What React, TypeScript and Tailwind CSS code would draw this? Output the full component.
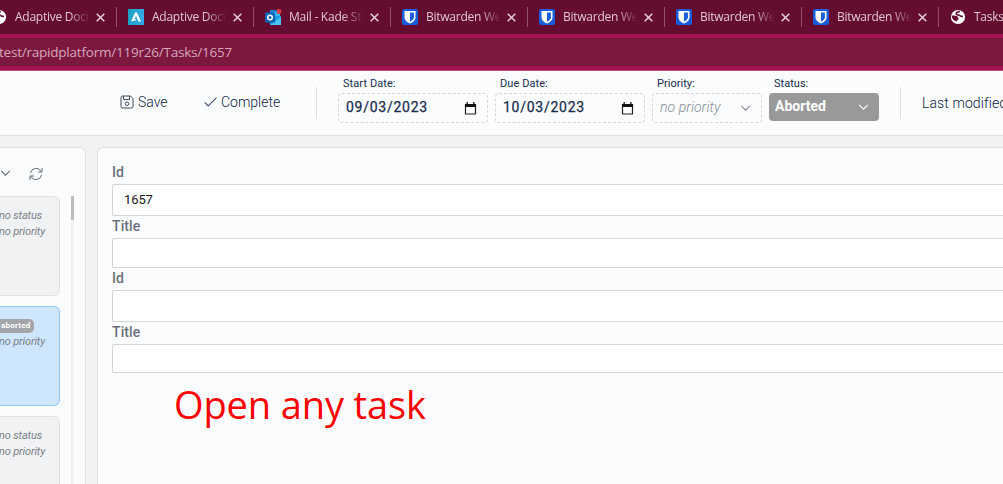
import type { ReactNode } from "react";

const Globe = () => (
  <svg className="size-4 shrink-0" viewBox="0 0 16 16">
    <circle cx="8" cy="8" r="7.1" fill="#fff" />
    <path d="M1.800 6.600c2.700.2 5 .1 6 1.300 1.200 1.300.9 2.300-.3 3.100l-.7 1.600C4.300 12.400 1.600 9.800 1.800 6.600z" fill="#640d31" />
    <path d="M9.800 2.600C7.400 2.500 5.900 3.700 6.300 5c.3 1.200 2.200.8 3.400 1.500 1 .6 1.200 1.200 3.200.7" fill="none" stroke="#640d31" strokeWidth="1.600" />
  </svg>
);

const Adaptive = () => (
  <svg className="size-4 shrink-0" viewBox="0 0 16 16">
    <defs>
      <linearGradient id="ad" x1="0" y1="0" x2="1" y2="0">
        <stop offset="0" stopColor="#18a3c0" />
        <stop offset="1" stopColor="#34a9e8" />
      </linearGradient>
    </defs>
    <rect width="16" height="16" fill="url(#ad)" />
    <path d="M3 12.500 7 3.500h2l4 9h-2.600L8 7l-1.600 3.500 1.500-.5.300 1.200z" fill="#fff" />
  </svg>
);

const Outlook = () => (
  <svg className="size-[17px] shrink-0" viewBox="0 0 17 17">
    <path d="M5 1h8v9H5z" fill="#1683d4" />
    <path d="M9 3h6v5H9z" fill="#35b4f0" />
    <path d="M4 8l12-1v9H5z" fill="#1b9de2" />
    <path d="M5 16l11-8v8z" fill="#49c3f5" />
    <rect y="3.500" width="10" height="10" rx="1" fill="#0763b8" />
    <circle cx="5" cy="8.500" r="2.300" fill="none" stroke="#fff" strokeWidth="1.500" />
    <circle cx="14" cy="2.500" r="2.400" fill="#e23d3f" />
  </svg>
);

const Shield = () => (
  <svg className="size-4 shrink-0" viewBox="0 0 16 16">
    <rect width="16" height="16" rx="2" fill="#175ddc" />
    <path d="M2.500 2h11v6.500c0 2.700-2.500 4.700-5.500 6-3-1.300-5.500-3.300-5.500-6z" fill="#fff" />
    <path d="M8 3.600h3.900v5c0 1.700-1.700 3-3.900 4.200z" fill="#175ddc" />
  </svg>
);

const tabs: { icon: ReactNode; title: string }[] = [
  { icon: <Globe />, title: "Adaptive Docu" },
  { icon: <Adaptive />, title: "Adaptive Docu" },
  { icon: <Outlook />, title: "Mail - Kade Ste" },
  { icon: <Shield />, title: "Bitwarden Web" },
  { icon: <Shield />, title: "Bitwarden Web" },
  { icon: <Shield />, title: "Bitwarden Web" },
  { icon: <Shield />, title: "Bitwarden Web" },
  { icon: <Globe />, title: "Tasks" },
];

const Tab = ({ icon, title }: { icon: ReactNode; title: string }) => (
  <div className="flex h-[34px] w-[137px] shrink-0 items-center pl-[11px]">
    <div className="flex w-6 shrink-0">{icon}</div>
    <span className="h-[18px] w-[74px] shrink-0 overflow-hidden font-['Open_Sans',sans-serif] text-[12px] leading-[18px] tracking-[-0.25px] whitespace-nowrap text-[#e0c5d0] [mask-image:linear-gradient(to_right,black_54px,transparent_75px)]">
      {title}
    </span>
    <svg className="ml-[7px] size-[9px] shrink-0" viewBox="0 0 9 9">
      <path d="M.7.700l7.600 7.600M8.300.700.700 8.300" stroke="#e8d0da" strokeWidth="1.500" />
    </svg>
    <div className="ml-auto h-5 w-px bg-[#94506b]" />
  </div>
);

const Chevron = ({ className }: { className: string }) => (
  <svg className={className} viewBox="0 0 12 7" fill="none" stroke="currentColor" strokeWidth="1.300">
    <path d="M1 1l5 5 5-5" />
  </svg>
);

const DateField = ({ label, value }: { label: string; value: string }) => (
  <div className="mr-[7px] w-[150px] shrink-0 pt-[5px]">
    <div className="h-[17px] pl-[5px] text-[11px] leading-[15px] tracking-[0.08px]">{label}</div>
    <div className="flex h-[30px] items-center justify-between rounded-[4px] border border-dashed border-[#d5d7da] pr-[10px] pl-[7px]">
      <span className="pb-[2px] text-[14px] tracking-[0.74px] [-webkit-text-stroke:0.25px_#172b4d]">{value}</span>
      <svg className="size-[13px]" viewBox="0 0 13 13">
        <path d="M1.500 2.500h10v9.500h-10z" fill="none" stroke="#222" strokeWidth="1.200" />
        <path d="M1 2h11v3H1zM2.500 0h1.300v2H2.500zM9.200 0h1.300v2H9.200z" fill="#111" />
      </svg>
    </div>
  </div>
);

const Card = ({ active = false }: { active?: boolean }) => (
  <div
    className={
      active
        ? "h-[100px] w-[60px] shrink-0 rounded-r-[6px] border border-l-0 border-[#92c5f5] bg-[#cfe6ff] pt-[11px]"
        : "h-[100px] w-[60px] shrink-0 rounded-r-[6px] border border-l-0 border-[#dfe1e3] bg-[#f1f2f3] pt-[11px]"
    }
  >
    {active ? (
      <div className="flex h-4 items-center">
        <span className="h-[14px] w-[34px] rounded-r-[5px] bg-[#a3a5a8] pl-px text-[8px] leading-[14px] font-bold tracking-[0.2px] text-white">
          aborted
        </span>
      </div>
    ) : (
      <div className="-ml-px h-4 text-[11px] leading-4 tracking-[-0.15px] text-[#7b8189] italic">no status</div>
    )}
    <div className="-ml-px h-4 text-[11px] leading-4 tracking-[-0.15px] text-[#7b8189] italic">no priority</div>
  </div>
);

const Field = ({ label, value = "", labelClass, boxClass }: { label: string; value?: string; labelClass: string; boxClass: string }) => (
  <div>
    <div className={`${labelClass} text-[14px] font-medium tracking-[0.1px] text-[#6a707b]`}>{label}</div>
    <div className={`${boxClass} flex items-center rounded-l-[2px] border border-r-0 border-[#d4d5d7] bg-white pl-[11px] text-[13px] tracking-[-0.1px] text-[#16181d]`}>
      {value}
    </div>
  </div>
);

export default function App() {
  return (
    <div className="flex h-[484px] w-[1003px] flex-col overflow-hidden bg-[#f1f2f4] font-[Roboto,sans-serif] text-[#172b4d]">
      <div className="h-[34px] shrink-0 overflow-hidden bg-[#640d31]">
        <div className="-ml-5 flex w-[1100px]">
          {tabs.map((t, i) => (
            <Tab key={i} {...t} />
          ))}
        </div>
      </div>
      <div className="h-[37px] shrink-0 border-t-4 border-b border-t-[#a3134f] border-b-[#b94a79] bg-[#a3134f]">
        <div className="h-7 bg-[#7c1840] font-['Open_Sans',sans-serif] text-[13.500px] leading-7 tracking-[-0.22px] text-[#d6a6ba]">
          <span className="-ml-px">test/rapidplatform/119r26/Tasks/1657</span>
        </div>
      </div>

      <header className="flex h-[65px] shrink-0 border-b border-[#dfe1e4] bg-[#fbfcfe]">
        <div className="flex h-[62px] w-[316px] shrink-0 items-center pl-[120px] text-[14px] font-light text-[#0d2240]">
          <svg className="mr-1 size-[14px]" viewBox="0 0 14 14" fill="none" stroke="#3c4a60" strokeWidth="1">
            <path d="M1 2.500Q1 1 2.500 1h8L13 3.500v8q0 1.500-1.500 1.500h-9Q1 13 1 11.500zM3.500 1v3.500h6V1" />
            <circle cx="7" cy="8.700" r="1.800" />
          </svg>
          <span className="w-[66px]">Save</span>
          <svg className="mr-[5px] h-[10px] w-[13px]" viewBox="0 0 13 10" fill="none" stroke="#46566f" strokeWidth="1.100">
            <path d="M.7 5.500 4.200 9 12.500.7" />
          </svg>
          <span className="-ml-px">Complete</span>
        </div>
        <div className="mt-4 mr-[21px] h-8 w-px shrink-0 bg-[#dfe1e4]" />
        <DateField label="Start Date:" value="09/03/2023" />
        <DateField label="Due Date:" value="10/03/2023" />
        <div className="mr-[7px] w-[110px] shrink-0 pt-[5px]">
          <div className="h-[17px] pl-[5px] text-[11px] leading-[15px] tracking-[0.02px]">Priority:</div>
          <div className="flex h-[30px] items-center justify-between rounded-[4px] border border-dashed border-[#d5d7da] pr-[10px] pl-[7px] text-[#858b93]">
            <span className="pb-[2px] text-[14px] font-light tracking-[0.08px] italic">no priority</span>
            <Chevron className="h-[6px] w-[11px]" />
          </div>
        </div>
        <div className="w-[110px] shrink-0 pt-[5px]">
          <div className="h-[17px] pl-[5px] text-[11px] leading-[15px] tracking-[0.02px]">Status:</div>
          <div className="flex h-7 items-center justify-between rounded-[4px] bg-[#999] pr-[10px] pl-[6px] text-white">
            <span className="pb-[2px] text-[14px] font-bold">Aborted</span>
            <Chevron className="h-[6px] w-[11px]" />
          </div>
        </div>
        <div className="mt-4 ml-[21px] h-8 w-px shrink-0 bg-[#dfe1e4]" />
        <div className="ml-[21px] pt-[21px] text-[14px] leading-[22px] font-light tracking-[0.1px] whitespace-nowrap text-[#0d2240]">Last modified</div>
      </header>

      <main className="flex min-h-0 flex-1 pt-[11px]">
        <aside className="flex w-[86px] shrink-0 flex-col rounded-tr-[6px] border-t border-r border-[#dfe1e4] bg-[#fbfcfe]">
          <div className="flex h-12 shrink-0 items-center gap-[18px] pt-[3px] text-[#626b79]">
            <Chevron className="mb-[2px] h-[6px] w-[11px]" />
            <svg className="size-[14px]" viewBox="0 0 14 14" fill="none" stroke="currentColor" strokeWidth="1">
              <path d="M1.500 6A5.600 5.600 0 0 1 12 4.500M13 1v4H9M12.500 8A5.600 5.600 0 0 1 2 9.500M1 13V9h4" />
            </svg>
          </div>
          <div className="flex min-h-0 flex-1 gap-[11px]">
            <div className="flex flex-col gap-[10px] overflow-hidden">
              <Card />
              <Card active />
              <Card />
            </div>
            <div className="w-[3px] bg-[#f1f1f1]">
              <div className="h-6 bg-[#bdbdbd]" />
            </div>
          </div>
        </aside>
        <section className="ml-[11px] flex-1 rounded-tl-[6px] border-t border-l border-[#dfe1e4] bg-[#fbfcfe] pt-[13px] pl-[14px]">
          <Field label="Id" value="1657" labelClass="h-[23px] leading-[22px]" boxClass="h-8" />
          <Field label="Title" labelClass="h-[22px] leading-[20px]" boxClass="h-[30px]" />
          <Field label="Id" labelClass="h-[22px] leading-[20px]" boxClass="h-8" />
          <Field label="Title" labelClass="h-[22px] leading-[20px]" boxClass="h-[29px]" />
          <div className="mt-[6px] ml-[62px] font-['Open_Sans',sans-serif] text-[38px] leading-[50px] tracking-[-0.12px] whitespace-nowrap text-[#ff0000]">
            Open any task
          </div>
        </section>
      </main>
    </div>
  );
}
